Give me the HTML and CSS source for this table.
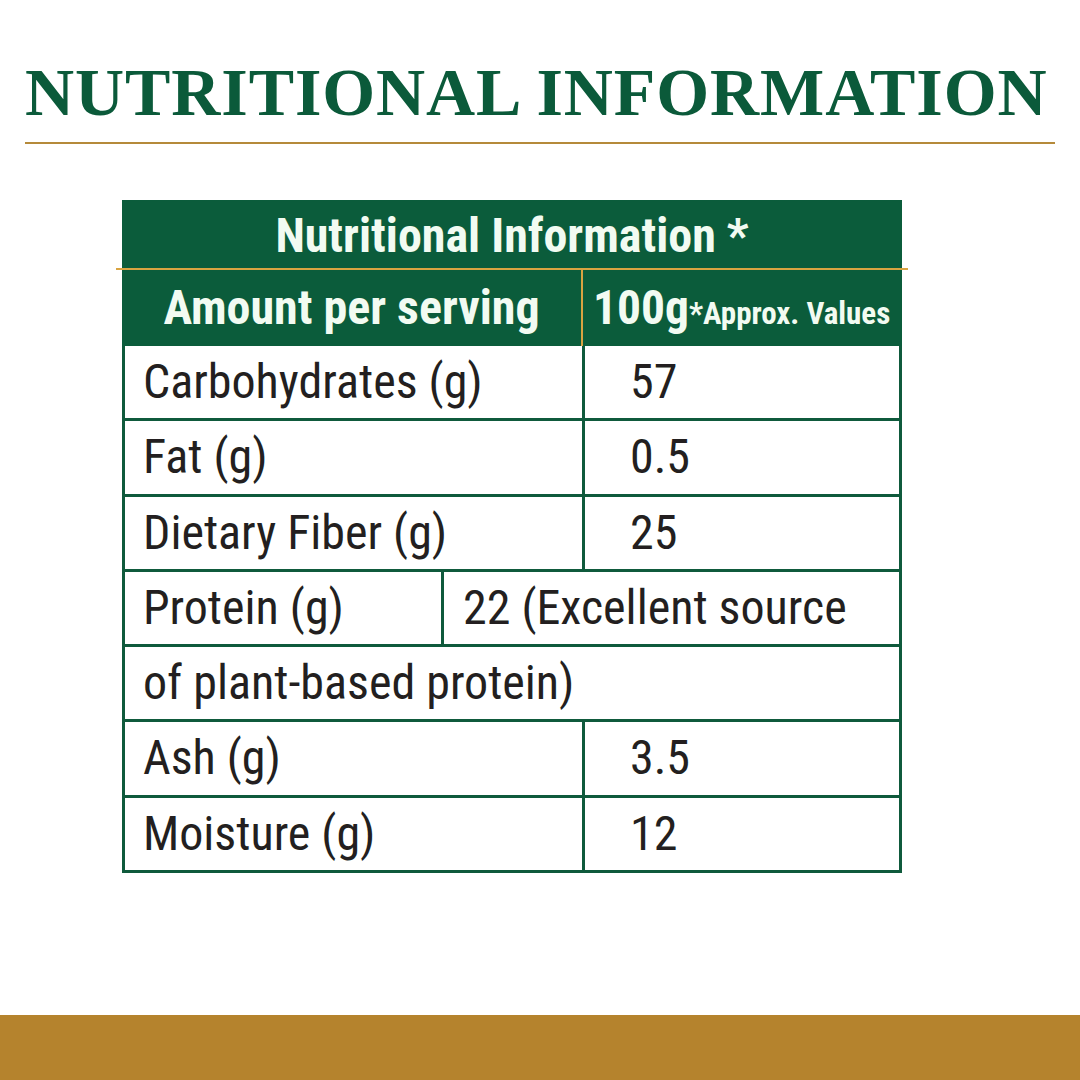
FILE: index.html
```html
<!DOCTYPE html>
<html>
<head>
<meta charset="utf-8">
<link rel="stylesheet" href="styles.css">
</head>
<body>
<div class="page">
  <header class="title-wrap">
    <h1 class="title">NUTRITIONAL INFORMATION</h1>
    <div class="title-rule"></div>
  </header>
  <main class="main">
    <div class="nt">
      <div class="nt-head1">Nutritional Information *</div>
      <div class="nt-gold"></div>
      <div class="nt-head2">
        <div class="h2-left">Amount per serving</div>
        <div class="h2-right"><span class="big">100g</span><span class="small">*Approx. Values</span></div>
      </div>
      <div class="row"><div class="c1">Carbohydrates (g)</div><div class="c2">57</div></div>
      <div class="row"><div class="c1">Fat (g)</div><div class="c2">0.5</div></div>
      <div class="row"><div class="c1">Dietary Fiber (g)</div><div class="c2">25</div></div>
      <div class="row row-protein"><div class="c1">Protein (g)</div><div class="c2">22 (Excellent source</div></div>
      <div class="row row-full"><div class="c1">of plant-based protein)</div></div>
      <div class="row"><div class="c1">Ash (g)</div><div class="c2">3.5</div></div>
      <div class="row"><div class="c1">Moisture (g)</div><div class="c2">12</div></div>
    </div>
  </main>
  <footer class="bottom-bar"></footer>
</div>
</body>
</html>
```
FILE: styles.css
```css
* { box-sizing: border-box; margin: 0; padding: 0; }
html, body { width: 1080px; height: 1080px; background: #ffffff; }
body { margin: 0; overflow: hidden; }
.page { width: 1080px; height: 1080px; display: flex; flex-direction: column; }
.title-wrap { padding: 58px 25px 0 25px; }
.title {
  font-family: "Liberation Serif", "Times New Roman", serif;
  font-weight: bold;
  font-size: 68px;
  line-height: 68px;
  color: #0b5a3a;
  letter-spacing: 0.9px;
  white-space: nowrap;
}
.title-rule { height: 2px; background: #b58a3a; margin-top: 16px; }
.main { flex: 1; padding-top: 56px; padding-left: 122px; }
.nt {
  width: 780px;
  font-family: "Roboto Condensed", "Liberation Sans Narrow", "Roboto", sans-serif;
  color: #231f20;
}
.nt-head1 {
  height: 68px;
  background: #0b5c3b;
  color: #f2fbf2;
  font-weight: bold;
  font-size: 48px;
  text-align: center;
  line-height: 72px;
}
.nt-gold { height: 2px; background: #d9a441; margin: 0 -6px; }
.nt-head2 {
  height: 76px;
  background: #0b5c3b;
  color: #f2fbf2;
  font-weight: bold;
  display: grid;
  grid-template-columns: 461px 1fr;
  overflow: hidden;
}
.h2-left { text-align: center; font-size: 48px; line-height: 76px; border-right: 2px solid #d9a441; white-space: nowrap; }
.h2-right { padding-left: 10px; line-height: 76px; white-space: nowrap; }
.h2-right .big { font-size: 47.5px; }
.h2-right .small { font-size: 31px; }
.row {
  display: grid;
  grid-template-columns: 457px 1fr;
  height: 75.3px;
  border-left: 3px solid #0f5a3c;
  border-right: 3px solid #0f5a3c;
  border-bottom: 3px solid #0f5a3c;
  font-size: 48px;
  line-height: 72px;
}
.row-protein { grid-template-columns: 316px 1fr; }
.row-full { grid-template-columns: 1fr; }
.c1 { padding-left: 18px; white-space: nowrap; }
.c2 { border-left: 3px solid #0f5a3c; padding-left: 45px; white-space: nowrap; }
.row-protein .c2 { padding-left: 19px; }
.bottom-bar { height: 65px; background: #b5832d; }
```
